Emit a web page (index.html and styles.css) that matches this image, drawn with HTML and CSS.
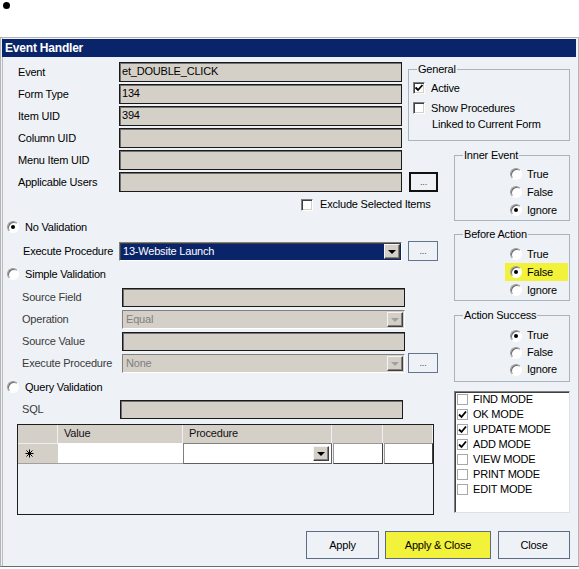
FILE: index.html
```html
<!DOCTYPE html>
<html>
<head>
    <meta charset="UTF-8">
    <title>Event Handler</title>
    <link rel="stylesheet" href="styles.css">
</head>
<body>
<div class="dot"></div>
<div class="dialog">
    <div class="title">Event Handler</div>
    <div class="content">
        <div class="left">
            <div class="stack">
                <div class="row top"><span class="lbl">Event</span><div class="fld">et_DOUBLE_CLICK</div></div>
                <div class="row top"><span class="lbl">Form Type</span><div class="fld">134</div></div>
                <div class="row top"><span class="lbl">Item UID</span><div class="fld">394</div></div>
                <div class="row top"><span class="lbl">Column UID</span><div class="fld"></div></div>
                <div class="row top"><span class="lbl">Menu Item UID</span><div class="fld"></div></div>
                <div class="row top"><span class="lbl">Applicable Users</span><div class="fld"></div><button class="more def">...</button></div>
            </div>
            <div class="exclude"><span class="cb"></span>Exclude Selected Items</div>

            <div class="choice first"><span class="rb on"></span>No Validation</div>
            <div class="row exec">
                <span class="lbl">Execute Procedure</span>
                <div class="sel active"><span>13-Website Launch</span><span class="arr"></span></div>
                <button class="more">...</button>
            </div>

            <div class="choice"><span class="rb"></span>Simple Validation</div>
            <div class="stack simple">
                <div class="row dim"><span class="lbl">Source Field</span><div class="fld"></div></div>
                <div class="row dim"><span class="lbl">Operation</span><div class="sel off"><span>Equal</span><span class="arr"></span></div></div>
                <div class="row dim"><span class="lbl">Source Value</span><div class="fld"></div></div>
                <div class="row dim"><span class="lbl">Execute Procedure</span><div class="sel off"><span>None</span><span class="arr"></span></div><button class="more near">...</button></div>
            </div>

            <div class="choice query"><span class="rb"></span>Query Validation</div>
            <div class="row sql"><span class="lbl">SQL</span><div class="fld"></div></div>

            <div class="grid">
                <div class="hd"></div>
                <div class="hd">Value</div>
                <div class="hd">Procedure</div>
                <div class="hd"></div>
                <div class="hd"></div>
                <div class="rh">
                    <svg width="9" height="9" viewBox="0 0 9 9"><path d="M4.5 0.5V8.5M0.5 4.5H8.5M1.5 1.5L7.5 7.5M7.5 1.5L1.5 7.5" stroke="#000" stroke-width="1" fill="none"/></svg>
                </div>
                <div class="cell"></div>
                <div class="cell combo"><span class="arr"></span></div>
                <div class="cell sunk"></div>
                <div class="cell sunk"></div>
            </div>
        </div>

        <div class="right">
            <fieldset class="grp general">
                <legend>General</legend>
                <div class="check"><span class="cb"><svg width="10" height="10" viewBox="0 0 10 10"><polyline points="1.5,4.5 4,7 8.5,2" stroke="#000" stroke-width="1.8" fill="none"/></svg></span>Active</div>
                <div class="check two"><span class="cb"></span><span>Show Procedures<br><span class="sub">Linked to Current Form</span></span></div>
            </fieldset>

            <fieldset class="grp opts inner">
                <legend>Inner Event</legend>
                <div class="opt"><span class="rb"></span>True</div>
                <div class="opt"><span class="rb"></span>False</div>
                <div class="opt"><span class="rb on"></span>Ignore</div>
            </fieldset>

            <fieldset class="grp opts before">
                <legend>Before Action</legend>
                <div class="opt"><span class="rb"></span>True</div>
                <div class="opt hl"><span class="rb on"></span>False</div>
                <div class="opt"><span class="rb"></span>Ignore</div>
            </fieldset>

            <fieldset class="grp opts success">
                <legend>Action Success</legend>
                <div class="opt"><span class="rb on"></span>True</div>
                <div class="opt"><span class="rb"></span>False</div>
                <div class="opt"><span class="rb"></span>Ignore</div>
            </fieldset>

            <div class="modes">
                <div class="mode"><span class="cb"></span>FIND MODE</div>
                <div class="mode"><span class="cb"><svg width="9" height="9" viewBox="0 0 9 9"><polyline points="1,4.5 3.5,7 8,1.5" stroke="#000" stroke-width="1.8" fill="none"/></svg></span>OK MODE</div>
                <div class="mode"><span class="cb"><svg width="9" height="9" viewBox="0 0 9 9"><polyline points="1,4.5 3.5,7 8,1.5" stroke="#000" stroke-width="1.8" fill="none"/></svg></span>UPDATE MODE</div>
                <div class="mode"><span class="cb"><svg width="9" height="9" viewBox="0 0 9 9"><polyline points="1,4.5 3.5,7 8,1.5" stroke="#000" stroke-width="1.8" fill="none"/></svg></span>ADD MODE</div>
                <div class="mode"><span class="cb"></span>VIEW MODE</div>
                <div class="mode"><span class="cb"></span>PRINT MODE</div>
                <div class="mode"><span class="cb"></span>EDIT MODE</div>
            </div>
        </div>
    </div>
    <div class="footer">
        <button class="btn apply">Apply</button>
        <button class="btn hl">Apply &amp; Close</button>
        <button class="btn close">Close</button>
    </div>
</div>
</body>
</html>
```

FILE: styles.css
```css
*{ margin:0; padding:0; box-sizing:border-box; }
body{ font:11px/13px "Liberation Sans", Arial, sans-serif; letter-spacing:-0.2px; color:#000; background:#fff; }
button{ font:inherit; letter-spacing:inherit; color:#000; cursor:default; }

.dot{ width:7px; height:7px; border-radius:50%; background:#000; margin:2px 0 0 3px; }

/* window frame */
.dialog{ width:579px; height:530px; margin-top:28px; padding:1px; border:1px solid #b4b4b4; border-bottom-color:#6c6c6c; background:#eef2f6; box-shadow:inset 1px 0 0 #eef2f6, inset 2px 0 0 #bcbcbc; }
.title{ height:18px; margin-right:1px; padding-left:3px; background:#0a246a; color:#fff; font-size:12px; font-weight:bold; line-height:18px; }
.content{ display:flex; gap:16px; padding:5px 6px 0 5px; }
.left{ width:431px; }
.right{ width:116px; }

/* label + field rows */
.stack{ display:flex; flex-direction:column; gap:2px; }
.row{ display:flex; align-items:center; height:20px; }
.lbl{ flex:none; white-space:nowrap; }
.row.top .lbl{ width:112px; padding-left:11px; }
.row.exec .lbl{ width:112px; padding-left:16px; }
.row.dim .lbl{ width:115px; padding-left:15px; color:#3a3a3a; }
.row.sql .lbl{ width:113px; padding-left:15px; color:#3a3a3a; }

.fld{ width:283px; height:20px; padding:2px 0 0 2px; background:#d4d0c8; border:1px solid #1a1a1a; box-shadow:inset 1px 1px 0 #707070; }
.row.dim .fld, .row.sql .fld{ height:19px; }

.sel{ display:flex; align-items:center; justify-content:space-between; width:283px; height:19px; padding:0 1px 0 3px; border:1px solid; border-color:#808080 #fff #fff #808080; }
.sel.active{ background:#0a246a; color:#fff; box-shadow:inset 1px 1px 0 #404040; }
.sel.off{ background:#d4d0c8; color:#808080; }
.arr{ position:relative; flex:none; width:16px; height:15px; background:#d4d0c8; border:1px solid; border-color:#f4f4f4 #404040 #404040 #f4f4f4; box-shadow:inset -1px -1px 0 #808080; }
.arr::after{ content:''; position:absolute; left:3px; top:5px; border-left:4px solid transparent; border-right:4px solid transparent; border-top:4px solid #000; }
.sel.off .arr::after{ border-top-color:#a0a0a0; }

.more{ flex:none; width:30px; height:20px; margin-left:6px; background:#eef2f6; border:1px solid #63748c; color:#444; font-size:9px; line-height:12px; }
.more.def{ width:29px; margin-left:7px; border:2px solid #111; }
.more.near{ margin-left:3px; }

/* check boxes and radio buttons */
.cb{ flex:none; display:flex; align-items:center; justify-content:center; width:12px; height:12px; background:#fff; border:1px solid; border-color:#808080 #fff #fff #808080; box-shadow:inset 1px 1px 0 #404040, inset -1px -1px 0 #d4d0c8; }
.rb{ flex:none; width:12px; height:12px; border-radius:50%; background:#fff; border:1px solid; border-color:#9a9a9a #fff #fff #9a9a9a; box-shadow:inset 1px 1px 0 #6a6a6a; }
.rb.on::after{ content:''; display:block; width:4px; height:4px; margin:3px; border-radius:50%; background:#000; }

.exclude{ display:flex; align-items:center; gap:7px; height:13px; margin-top:6px; padding-left:294px; }
.choice{ display:flex; align-items:center; gap:6px; height:14px; margin-top:6px; }
.choice.first{ margin-top:9px; }
.choice.query{ margin-top:7px; }
.row.exec{ margin-top:7px; }
.stack.simple{ margin-top:6px; }
.row.sql{ margin-top:6px; height:19px; }

/* data grid */
.grid{ display:grid; grid-template-columns:40px 125px 149px 51px 50px; grid-template-rows:18px 21px; align-content:start; width:417px; height:91px; margin:5px 0 0 10px; border:1px solid #1e1e1e; }
.hd{ padding:2px 0 0 6px; background:#d4d0c8; border-right:1px solid #f0f0f0; color:#111; }
.hd:last-child{ border-right:none; }
.rh{ display:flex; align-items:center; padding-left:7px; background:#d4d0c8; border-top:1px solid #eee; border-bottom:1px solid #a0a0a0; }
.cell{ background:#fff; border-bottom:1px solid #a0a0a0; }
.cell.combo{ display:flex; align-items:center; justify-content:flex-end; padding-right:2px; border:1px solid; border-color:#808080 #606060 #606060 #808080; }
.cell.sunk{ border:1px solid; border-color:#9a9a9a #404040 #404040 #9a9a9a; margin-left:1px; }

/* group boxes */
.grp{ min-width:0; margin:0; padding:0; border:1px solid #a9b4be; }
.grp legend{ margin-left:8px; padding:0 1px; line-height:12px; }
.grp.general{ margin:1px 0 0 -46px; padding:6px 0 8px 4px; }
.grp.general legend{ margin-left:4px; }
.check{ display:flex; align-items:center; gap:6px; height:14px; }
.check.two{ align-items:flex-start; height:auto; margin-top:5px; line-height:16px; }
.check.two .cb{ margin-top:2px; }
.check .sub{ padding-left:1px; }

.opt{ display:flex; align-items:center; gap:5px; height:18px; padding-left:55px; }
.opt.hl{ margin:0 1px 0 50px; padding-left:5px; background:#f2f23a; }
.grp.inner{ margin-top:8px; padding:4px 0 1px; }
.grp.before{ margin-top:7px; padding:5px 0 1px; }
.grp.success{ margin-top:8px; padding:6px 0 3px; }
.grp.success .opt{ height:17px; }

.modes{ height:122px; margin-top:9px; padding-left:2px; background:#fff; border:1px solid; border-color:#808080 #e0e0e0 #e0e0e0 #808080; box-shadow:inset 1px 1px 0 #404040; }
.mode{ display:flex; align-items:center; gap:5px; height:15px; }
.mode .cb{ width:11px; height:11px; border:1px solid #a8a8a8; box-shadow:none; }

/* bottom buttons */
.footer{ display:flex; justify-content:flex-end; padding-right:7px; margin-top:16px; }
.btn{ height:28px; background:#eef2f6; border:1px solid #5b6c84; }
.btn.apply{ width:73px; }
.btn.hl{ width:106px; margin-left:6px; background:#f2f23a; }
.btn.close{ width:72px; margin-left:7px; }
```
